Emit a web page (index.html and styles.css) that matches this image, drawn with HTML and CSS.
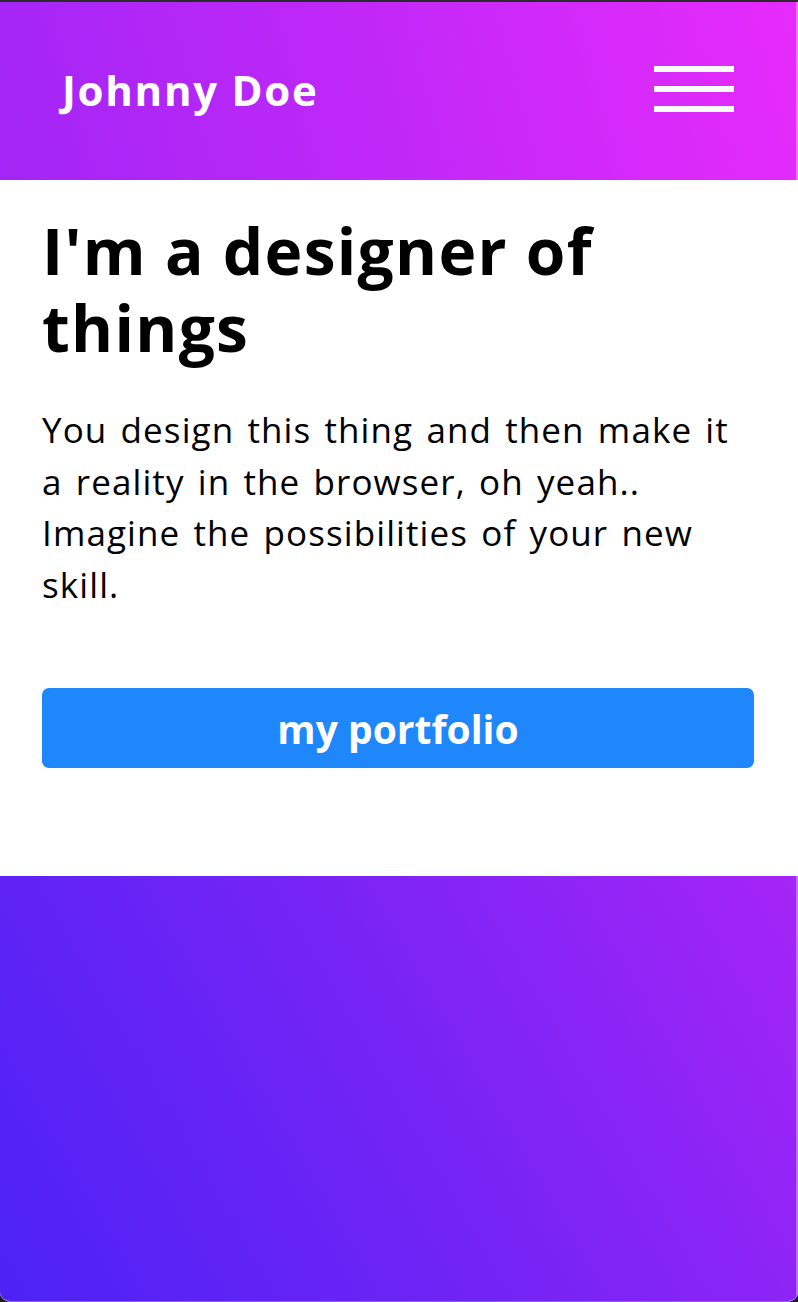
FILE: index.html
```html
<!DOCTYPE html>
<html lang="en">
<head>
<meta charset="utf-8">
<title>Johnny Doe</title>
<link rel="stylesheet" href="styles.css">
</head>
<body>
<div class="window">
  <header class="header">
    <div class="logo">Johnny Doe</div>
    <button class="menu" aria-label="Menu">
      <span class="bar"></span>
      <span class="bar"></span>
      <span class="bar"></span>
    </button>
  </header>
  <main class="hero">
    <h1 class="title">I'm a designer of things</h1>
    <p class="lead">You design this thing and then make it a reality in the browser, oh yeah.. Imagine the possibilities of your new skill.</p>
    <a class="cta" href="#">my portfolio</a>
  </main>
  <section class="footer-band"></section>
  <div class="edge"></div>
</div>
</body>
</html>
```
FILE: styles.css
```css
* { box-sizing: border-box; }
html, body { margin: 0; padding: 0; height: 100%; }
body {
  background: #1c1c1c;
  font-family: "Open Sans", "Noto Sans", sans-serif;
  overflow: hidden;
}
.window {
  position: relative;
  height: 1302px;
  display: flex;
  flex-direction: column;
  background: #fff;
  border-top: 2px solid #2b2b2b;
  border-bottom: 1px solid #8d62ee;
  border-radius: 0 0 10px 10px;
  overflow: hidden;
}
.header {
  height: 178px;
  flex: none;
  display: flex;
  align-items: center;
  justify-content: space-between;
  padding: 0 64px 0 62px;
  background: linear-gradient(75deg, #a226f5 0%, #c228f8 50%, #e72bfc 100%);
}
.logo {
  color: #fff;
  font-weight: 700;
  font-size: 42px;
  letter-spacing: 1.7px;
  margin-top: -3px;
}
.menu {
  display: flex;
  flex-direction: column;
  gap: 14px;
  padding: 0;
  margin-top: -4px;
  background: none;
  border: 0;
}
.bar {
  display: block;
  width: 80px;
  height: 6px;
  background: #fff;
}
.hero {
  flex: none;
  height: 696px;
  padding: 32px 44px 0 42px;
}
.title {
  margin: 0;
  font-size: 64px;
  line-height: 77px;
  font-weight: 700;
  color: #000;
  letter-spacing: 1.3px;
}
.lead {
  margin: 38px 0 0;
  font-size: 35px;
  line-height: 51.5px;
  color: #000;
  letter-spacing: 1.1px;
  word-spacing: 3px;
}
.cta {
  display: flex;
  align-items: center;
  justify-content: center;
  margin-top: 78px;
  height: 80px;
  border-radius: 7px;
  background: #1e87fb;
  color: #fff;
  font-size: 39px;
  font-weight: 700;
  text-decoration: none;
}
.footer-band {
  flex: 1;
  background: linear-gradient(60deg, #4c22f5 0%, #7424f5 50%, #a624f8 100%);
}
.edge {
  position: absolute;
  top: 0;
  right: 0;
  bottom: 0;
  width: 2px;
  background: rgba(255, 255, 255, 0.35);
}
```
